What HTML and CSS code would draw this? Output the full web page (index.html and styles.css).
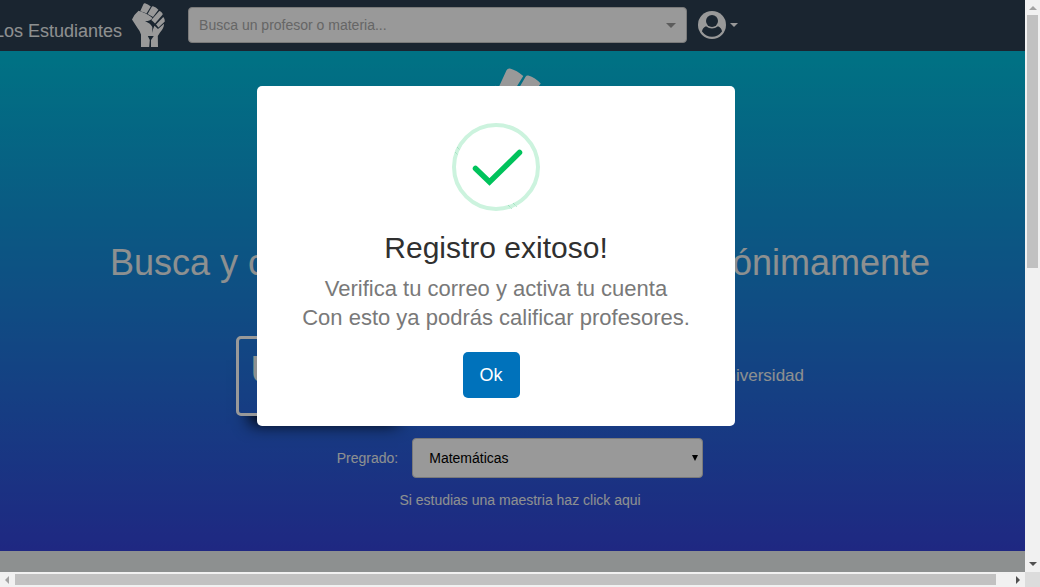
FILE: index.html
```html
<!DOCTYPE html>
<html lang="es">
<head>
<meta charset="utf-8">
<title>Los Estudiantes</title>
<link rel="stylesheet" href="styles.css">
</head>
<body>
<svg class="defs" aria-hidden="true">
  <symbol id="fist" viewBox="0 0 33 44">
    <path d="M11.500 1 Q12 0 13 .2 Q16 1 18.800 3.500 L14.500 10.500 Q12 9 8.200 8.200 Z"/>
    <path d="M19.800 3.800 Q20.300 3 21 3.300 Q24 4.200 26.400 6.800 L21 14 Q18.500 12.500 15.600 11 Z"/>
    <path d="M27.300 8 Q30.500 9 30.700 11.500 L23 20.500 Q21.500 18.500 19.300 17 Z"/>
    <path d="M31.300 14 Q33 15.500 32.800 18.500 L26.500 24.500 L24 21.500 Z"/>
    <path fill-rule="evenodd" d="M6.500 7.700 Q14 9.500 20.500 15 Q19 18 13 18.200 Q19 20.500 20.300 24 V30 Q20.700 26 22.500 22.800 L26 26 L32 20.800 Q32 25.500 28 29.500 L25.800 33 L26 44 H9 V31.500 Q8 28 5.500 25 L0 16.500 Q2 11.500 6.500 7.700 Z M15.800 33 L17.800 37 L17.200 44 H19 L19 37 L21.800 33 Z"/>
  </symbol>
</svg>
<div class="window">
  <div class="page">
    <header class="nav">
      <a class="brand" href="#">Los Estudiantes</a>
      <svg class="brand-fist" role="img" aria-label="Puño"><use href="#fist"/></svg>
      <div class="search">
        <input class="search-input" type="text" aria-label="Buscar" placeholder="Busca un profesor o materia...">
        <span class="caret search-caret"></span>
      </div>
      <button class="user" type="button" aria-label="Cuenta">
        <svg class="user-icon" viewBox="0 0 28 28"><circle cx="14" cy="14" r="14" fill="#fff"/><g fill="#2c3e50"><circle cx="14" cy="9.900" r="6"/><path d="M8 15.200Q14 19.800 20 15.200Q23.800 17 24 20.500Q20 25.800 14 25.800Q8 25.800 4 20.500Q4.200 17 8 15.200Z"/></g></svg>
        <span class="caret user-caret"></span>
      </button>
    </header>
    <main class="hero">
      <svg class="hero-fist" aria-hidden="true"><use href="#fist"/></svg>
      <h1 class="title"><span>Busca y comenta</span> <span>sobre profesores anónimamente</span></h1>
      <div class="choice">
        <button class="uni" type="button">Uni</button>
        <span>Selecciona tu universidad</span>
      </div>
      <div class="field">
        <label for="pregrado">Pregrado:</label>
        <div class="select-wrap">
          <select id="pregrado" class="select"><option>Matemáticas</option></select>
          <span class="select-arrow"></span>
        </div>
      </div>
      <a class="master" href="#">Si estudias una maestria haz click aqui</a>
    </main>
  </div>
  <div class="vbar"><span class="arrow up"></span><span class="vthumb"></span><span class="arrow down"></span></div>
  <div class="hbar"><span class="arrow left"></span><span class="hthumb"></span><span class="arrow right"></span></div>
  <div class="corner"></div>
  <div class="overlay">
    <div class="modal" role="dialog" aria-labelledby="done">
      <svg class="check" viewBox="0 0 88 88" aria-hidden="true"><circle cx="44" cy="44" r="42" fill="none" stroke="#ccf3de" stroke-width="4"/><path d="M23.500 45.500 L37.500 59 L67.500 29.500" fill="none" stroke="#00c35c" stroke-width="5.500" stroke-linecap="round"/><path d="M5 24l3 3M3 29l3 3M56 82l4 4M61 80l4 4" stroke="#8fdcb4" stroke-dasharray="1 1"/></svg>
      <h2 class="modal-title" id="done">Registro exitoso!</h2>
      <p class="modal-text">Verifica tu correo y activa tu cuenta<br>Con esto ya podrás calificar profesores.</p>
      <button class="ok" type="button">Ok</button>
    </div>
  </div>
</div>
</body>
</html>
```
FILE: styles.css
```css
* { box-sizing: border-box; }
body { margin: 0; font-family: "Liberation Sans", Arial, sans-serif; font-size: 14px; color: #fff; }
a { color: inherit; text-decoration: none; }
button { font: inherit; color: inherit; cursor: pointer; }
.defs { position: absolute; width: 0; height: 0; }
.window { display: grid; grid-template-columns: minmax(0, 1fr) 15px; grid-template-rows: minmax(0, 1fr) 15px; height: 100vh; overflow: hidden; }
.page { grid-area: 1 / 1; overflow: hidden; background: #ecf0f1; }
.overlay { grid-area: 1 / 1; display: flex; justify-content: center; align-items: flex-start; padding: 86px 33px 0 0; background: rgba(0, 0, 0, .4); z-index: 2; }

.nav { display: flex; align-items: flex-start; height: 51px; background: #2c3e50; }
.brand { margin-left: -6px; padding-top: 20px; font-size: 18px; line-height: 22px; color: #ecf0f1; }
.brand-fist { width: 33px; height: 44px; margin: 3px 23px 0 10px; fill: #fff; }
.search { position: relative; flex: 0 1 499px; margin-top: 7px; }
.search-input { display: block; width: 100%; height: 36px; padding: 0 10px; border: 1px solid #ccc; border-radius: 4px; background: #fff; font: inherit; }
.search-input::placeholder { color: #aaa; }
.caret { border: solid transparent; border-bottom: 0; }
.search-caret { position: absolute; right: 11px; top: 16px; border-width: 5px 5px 0; border-top-color: #999; }
.user { display: flex; align-items: center; gap: 4px; margin: 11px 0 0 11px; padding: 0; border: 0; background: none; }
.user-icon { width: 28px; height: 28px; }
.user-caret { border-width: 4px 4px 0; border-top-color: #fff; }

.hero { display: flex; flex-direction: column; align-items: center; height: 500px; padding: 17px 0 0 15px; background: linear-gradient(#00bfdc, #3443d9); }
.hero-fist { width: 76px; height: 101px; margin-right: 4px; fill: #fff; }
.title { display: flex; justify-content: space-between; width: 820px; margin: 73px 0 0; font-size: 36px; line-height: 42px; font-weight: 400; white-space: nowrap; color: #ecf0f1; }
.choice { display: flex; align-items: center; justify-content: space-between; width: 568px; margin-top: 52px; font-size: 17px; line-height: 20px; color: #ecf0f1; }
.uni { width: 164px; height: 80px; padding: 0 0 12px 12px; border: 3px solid #fff; border-radius: 5px; background: none; font-size: 38px; font-weight: 700; text-align: left; box-shadow: 6px 16px 16px -8px #000; }
.field { display: flex; align-items: center; gap: 14px; margin-top: 22px; color: #ecf0f1; }
.select-wrap { position: relative; width: 291px; }
.select { width: 100%; height: 40px; padding: 0 16px; border: 1px solid #ccc; border-radius: 4px; background: #fff; color: #000; font: inherit; appearance: none; display: block; }
.select-arrow { position: absolute; right: 5px; top: 17px; border: solid transparent; border-width: 6px 3px 0; border-top-color: #000; }
.master { margin-top: 14px; line-height: 17px; color: #ecf0f1; }

.modal { display: flex; flex-direction: column; align-items: center; width: 478px; padding: 37px 17px 28px; border-radius: 5px; background: #fff; }
.check { width: 88px; height: 88px; }
.modal-title { margin: 17px 0 0; font-size: 30px; line-height: 40px; font-weight: 400; color: #303030; }
.modal-text { margin: 6px 0 0; font-size: 22px; line-height: 29px; text-align: center; color: #797979; white-space: nowrap; }
.ok { width: 57px; height: 46px; margin: 20px 10px 0 0; padding: 0; border: 0; border-radius: 5px; background: #0072bb; color: #fff; font-size: 18px; }

.vbar { grid-area: 1 / 2; display: flex; flex-direction: column; align-items: center; background: #f1f1f1; }
.hbar { grid-area: 2 / 1; display: flex; align-items: center; background: #f1f1f1; }
.corner { grid-area: 2 / 2; background: #dcdcdc; }
.vthumb { width: 11px; height: 253px; background: #c1c1c1; }
.hthumb { flex: 1; height: 11px; margin-right: 14px; background: #c1c1c1; }
.arrow { flex: none; border: 4px solid transparent; }
.up { margin: 2px 0 5px; border-bottom-color: #a3a3a3; }
.down { margin: auto 0 2px; border-top-color: #505050; }
.left { margin: 0 6px 0 1px; border-right-color: #a3a3a3; }
.right { margin: 0 1px 0 6px; border-left-color: #505050; }
```
